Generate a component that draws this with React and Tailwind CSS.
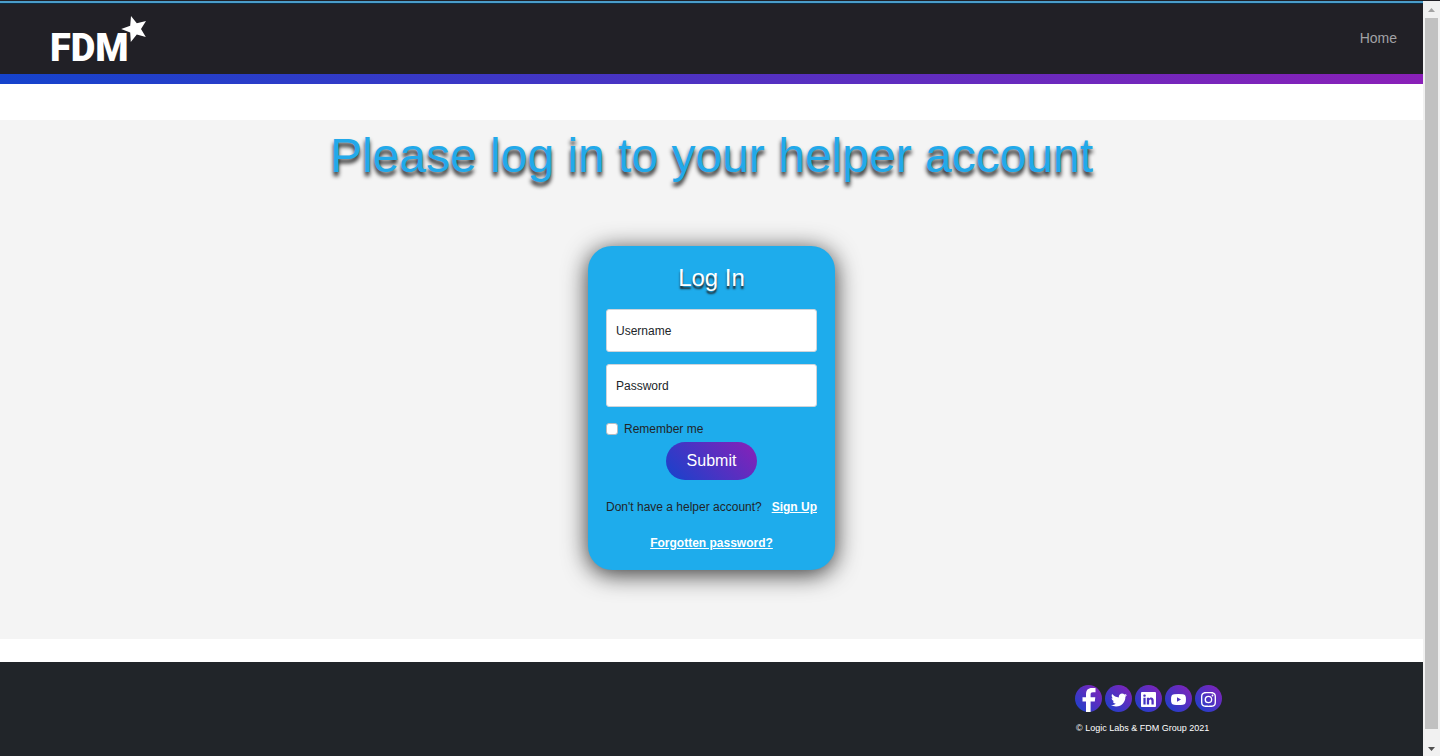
import { FaTwitter } from "react-icons/fa";
import { BsLinkedin, BsInstagram } from "react-icons/bs";

function FacebookMark({ className }) {
  return (
    <svg viewBox="0 0 14 24" className={className} fill="currentColor" aria-hidden="true">
      <path d="M4 24V13.5H0.5V9.2H4V6C4 2.2 6 0 10 0H13.5V4.2H11C9.2 4.2 8.6 5 8.6 6.4V9.2H13.3L12.8 13.5H8.6V24Z" />
    </svg>
  );
}

function YoutubeMark({ className }) {
  return (
    <svg viewBox="0 0 15 11" className={className} fill="currentColor" aria-hidden="true">
      <path fillRule="evenodd" d="M3 0.3Q7.5 -0.3 12 0.3Q14.6 0.5 14.8 3Q15.1 5.5 14.8 8Q14.6 10.5 12 10.7Q7.5 11.3 3 10.7Q0.4 10.5 0.2 8Q-0.1 5.5 0.2 3Q0.4 0.5 3 0.3ZM6 3.2V7.8L10 5.5Z" />
    </svg>
  );
}

const socials = [
  { name: "Facebook", Icon: FacebookMark, size: "h-6 w-[14px]" },
  { name: "Twitter", Icon: FaTwitter, size: "size-4" },
  { name: "LinkedIn", Icon: BsLinkedin, size: "size-[15px]" },
  { name: "YouTube", Icon: YoutubeMark, size: "h-[11px] w-[15px]" },
  { name: "Instagram", Icon: BsInstagram, size: "size-[15px]" },
];

function Logo() {
  return (
    <a href="#" aria-label="FDM home" className="relative block text-white">
      <span className="block font-[Roboto,sans-serif] text-[38px] leading-[38px] font-black">FDM</span>
      <svg viewBox="0 0 25 26" className="absolute -top-[13px] left-[71px] h-[26px] w-[25px]" fill="currentColor" aria-hidden="true">
        <path d="M10 0L15.8 7.2L25 5L20 13L24.8 21L15.8 18.6L9.8 26L9.2 16.4L0.2 13L9.2 9.8Z" />
      </svg>
    </a>
  );
}

function Field({ id, type, label }) {
  return (
    <div className="relative mb-3">
      <input
        id={id}
        type={type}
        placeholder=" "
        className="peer block h-[43px] w-full rounded-[3px] border border-[#ced4da] bg-white px-[10px] text-xs text-[#212529]"
      />
      <label htmlFor={id} className="pointer-events-none absolute inset-y-0 left-[10px] hidden items-center peer-placeholder-shown:flex">
        {label}
      </label>
    </div>
  );
}

function ScrollRail() {
  return (
    <div aria-hidden="true" className="flex w-[17px] shrink-0 flex-col items-center border-t border-[#212026] bg-[#f1f1f1]">
      <svg viewBox="0 0 17 17" className="h-[17px] w-[17px] shrink-0" fill="#a3a3a3"><path d="M5 11L8.5 7L12 11Z" /></svg>
      <div className="w-[13px] grow bg-[#c1c1c1]" />
      <div className="flex h-[27px] shrink-0 items-end">
        <svg viewBox="0 0 17 17" className="h-[17px] w-[17px]" fill="#505050"><path d="M5 8L12 8L8.5 12Z" /></svg>
      </div>
    </div>
  );
}

export default function App() {
  return (
    <div className="flex min-h-screen bg-white font-['Liberation_Sans',Arial,sans-serif] text-[#212529]">
      <div className="flex min-w-0 grow flex-col">
        <div className="border-t border-[#212026] bg-[#4a9cc9] pt-[2px]">
          <header className="flex h-[71px] items-center justify-between border-t border-[#0c2c44] bg-[#212026] pr-[26px] pl-[50px]">
            <div className="pt-[18px]"><Logo /></div>
            <nav className="pb-0.5"><a href="#" className="text-sm text-[#a2a2a5]">Home</a></nav>
          </header>
        </div>
        <div className="h-[10px] bg-linear-to-r/srgb from-[#1543cc] to-[#8a20b8]" />
        <main className="mt-9 mb-[23px] flex grow flex-col items-center bg-[#f4f4f4] pt-[7px]">
          <h1 className="text-center text-5xl leading-[58px] text-[#22a9ea] [text-shadow:0_4px_4px_#111]">
            Please log in to your helper account
          </h1>
          <form
            onSubmit={(e) => e.preventDefault()}
            className="mt-[61px] mb-[68px] flex w-[247px] flex-col rounded-3xl bg-[#1eacec] px-[18px] pt-4 pb-[18px] text-xs shadow-[0_4px_25px_rgba(0,0,0,0.8)]"
          >
            <h2 className="mb-[15px] text-center text-2xl leading-8 text-white [text-shadow:0_3px_2px_#222]">Log In</h2>
            <Field id="username" type="text" label="Username" />
            <Field id="password" type="password" label="Password" />
            <label className="mt-px flex items-center gap-[6px] leading-[18px]">
              <input type="checkbox" className="size-3 appearance-none rounded-[3px] border border-[#b5bcc2] bg-white checked:bg-blue-600" />
              Remember me
            </label>
            <button type="submit" className="mt-1 h-[38px] self-center rounded-full bg-linear-[45deg] from-[#1543cc] to-[#8a20b8] px-[21px] text-base text-white">
              Submit
            </button>
            <p className="mt-[18px] flex justify-between leading-[18px] whitespace-nowrap">
              Don't have a helper account?
              <a href="#" className="font-bold text-white underline">Sign Up</a>
            </p>
            <a href="#" className="mt-[18px] self-center leading-[18px] font-bold text-white underline">Forgotten password?</a>
          </form>
        </main>
        <footer className="flex h-[94px] justify-end bg-[#212529] pt-[23px] pr-[201px]">
          <div>
            <ul className="flex gap-[3px]">
              {socials.map(({ name, Icon, size }) => (
                <li key={name}>
                  <a href="#" aria-label={name} className="flex size-[27px] items-center justify-center rounded-full bg-linear-[45deg] from-[#1543cc] to-[#8a20b8] pt-0.5 text-white">
                    <Icon className={size} />
                  </a>
                </li>
              ))}
            </ul>
            <p className="mt-[10px] pl-px text-[9px] leading-3 text-white">© Logic Labs &amp; FDM Group 2021</p>
          </div>
        </footer>
      </div>
      <ScrollRail />
    </div>
  );
}
